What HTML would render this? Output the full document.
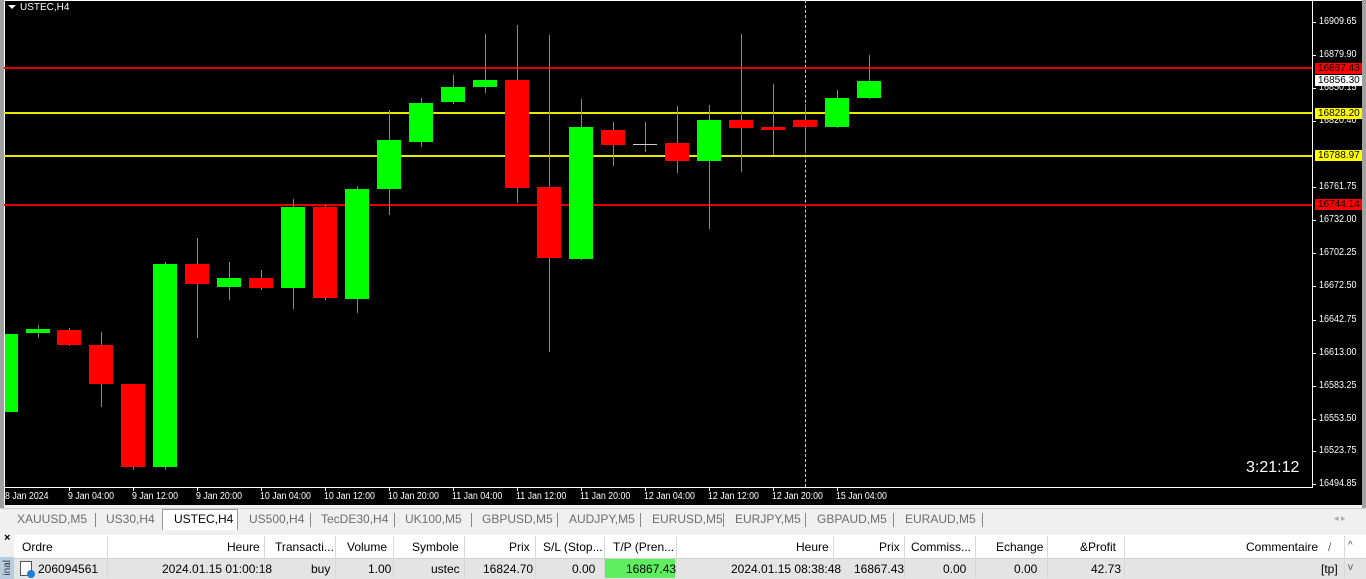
<!DOCTYPE html>
<html><head><meta charset="utf-8"><style>
*{margin:0;padding:0;box-sizing:border-box}
body{width:1366px;height:579px;overflow:hidden;background:#f0f0f0;font-family:"Liberation Sans",sans-serif;position:relative}
.a{position:absolute}
#chart{left:4px;top:0;width:1358px;height:505px;background:#000;border-top:1px solid #fff;border-left:1px solid #fff}
.g{background:#00ff00}.r{background:#ff0000}
.w{position:absolute;width:1px;background:#888}
.p{position:absolute;left:1319px;color:#fff;font-size:10px;transform:scaleX(.9);transform-origin:left}
.t{position:absolute;left:1312px;width:4px;height:1px;background:#fff}
.lb{position:absolute;left:1315px;width:47px;height:11px;font-size:10px;line-height:11px;padding-left:3px}
.d{position:absolute;top:491px;color:#fff;font-size:10px;transform:scaleX(.88);transform-origin:left}
.dt{position:absolute;top:487px;width:1px;height:4px;background:#fff}
.tab{position:absolute;top:512px;font-size:12px;color:#6d6d6d}
.sep{position:absolute;top:513px;width:1px;height:14px;background:#888}
.h{position:absolute;top:540px;font-size:12px;color:#000}
.c{position:absolute;top:562px;font-size:12px;color:#000}
.vl{position:absolute;top:536px;width:1px;height:42px;background:#d8d8d8}
</style></head><body>
<div class="a" style="left:0;top:0;width:4px;height:508px;background:#a0a0a0"></div>
<div id="chart" class="a"></div>
<div class="a" style="left:1362px;top:0;width:4px;height:508px;background:#a0a0a0"></div>
<div class="a" style="left:8px;top:5px;width:0;height:0;border-left:4px solid transparent;border-right:4px solid transparent;border-top:4px solid #fff"></div>
<div class="a" style="left:20px;top:2px;color:#fff;font-size:10px">USTEC,H4</div>
<div class="a" style="left:1312px;top:0;width:1px;height:488px;background:#fff"></div>
<div class="a" style="left:4px;top:487px;width:1309px;height:1px;background:#fff"></div>
<div class="a" style="left:805px;top:0;width:0;height:487px;border-left:1px dashed #ccc"></div>
<div class="a" style="left:4px;top:67px;width:1308px;height:2px;background:#e00000"></div>
<div class="a" style="left:4px;top:112px;width:1308px;height:2px;background:#e8e800"></div>
<div class="a" style="left:4px;top:155px;width:1308px;height:2px;background:#e8e800"></div>
<div class="a" style="left:4px;top:204px;width:1308px;height:2px;background:#e00000"></div>
<div id="candles">
<div class="a g" style="left:5px;top:334px;width:13px;height:78px"></div>
<div class="w" style="left:38px;top:325px;height:13px"></div><div class="a g" style="left:26px;top:329px;width:24px;height:4px"></div>
<div class="w" style="left:69px;top:328px;height:18px"></div><div class="a r" style="left:57px;top:330px;width:24px;height:15px"></div>
<div class="w" style="left:101px;top:332px;height:75px"></div><div class="a r" style="left:89px;top:345px;width:24px;height:39px"></div>
<div class="w" style="left:133px;top:384px;height:86px"></div><div class="a r" style="left:121px;top:384px;width:24px;height:83px"></div>
<div class="w" style="left:165px;top:262px;height:208px"></div><div class="a g" style="left:153px;top:264px;width:24px;height:203px"></div>
<div class="w" style="left:197px;top:238px;height:100px"></div><div class="a r" style="left:185px;top:264px;width:24px;height:20px"></div>
<div class="w" style="left:229px;top:262px;height:38px"></div><div class="a g" style="left:217px;top:278px;width:24px;height:9px"></div>
<div class="w" style="left:261px;top:270px;height:20px"></div><div class="a r" style="left:249px;top:278px;width:24px;height:10px"></div>
<div class="w" style="left:293px;top:199px;height:110px"></div><div class="a g" style="left:281px;top:207px;width:24px;height:81px"></div>
<div class="w" style="left:325px;top:205px;height:95px"></div><div class="a r" style="left:313px;top:207px;width:24px;height:91px"></div>
<div class="w" style="left:357px;top:186px;height:127px"></div><div class="a g" style="left:345px;top:189px;width:24px;height:110px"></div>
<div class="w" style="left:389px;top:110px;height:105px"></div><div class="a g" style="left:377px;top:140px;width:24px;height:49px"></div>
<div class="w" style="left:421px;top:98px;height:49px"></div><div class="a g" style="left:409px;top:103px;width:24px;height:39px"></div>
<div class="w" style="left:453px;top:75px;height:29px"></div><div class="a g" style="left:441px;top:87px;width:24px;height:15px"></div>
<div class="w" style="left:485px;top:34px;height:59px"></div><div class="a g" style="left:473px;top:80px;width:24px;height:7px"></div>
<div class="w" style="left:517px;top:25px;height:178px"></div><div class="a r" style="left:505px;top:80px;width:24px;height:108px"></div>
<div class="w" style="left:549px;top:35px;height:317px"></div><div class="a r" style="left:537px;top:187px;width:24px;height:71px"></div>
<div class="w" style="left:581px;top:99px;height:161px"></div><div class="a g" style="left:569px;top:127px;width:24px;height:132px"></div>
<div class="w" style="left:613px;top:122px;height:44px"></div><div class="a r" style="left:601px;top:130px;width:24px;height:15px"></div>
<div class="w" style="left:645px;top:122px;height:30px"></div><div class="a" style="left:633px;top:144px;width:24px;height:1px;background:#ccc"></div>
<div class="w" style="left:677px;top:106px;height:67px"></div><div class="a r" style="left:665px;top:143px;width:24px;height:18px"></div>
<div class="w" style="left:709px;top:105px;height:124px"></div><div class="a g" style="left:697px;top:120px;width:24px;height:41px"></div>
<div class="w" style="left:741px;top:34px;height:138px"></div><div class="a r" style="left:729px;top:120px;width:24px;height:8px"></div>
<div class="w" style="left:773px;top:84px;height:71px"></div><div class="a r" style="left:761px;top:127px;width:24px;height:3px"></div>
<div class="w" style="left:805px;top:104px;height:48px"></div><div class="a r" style="left:793px;top:120px;width:24px;height:7px"></div>
<div class="w" style="left:837px;top:90px;height:38px"></div><div class="a g" style="left:825px;top:98px;width:24px;height:29px"></div>
<div class="w" style="left:869px;top:55px;height:44px"></div><div class="a g" style="left:857px;top:81px;width:24px;height:17px"></div>
</div>
<div class="t" style="top:22px"></div><div class="p" style="top:16px">16909.65</div>
<div class="t" style="top:55px"></div><div class="p" style="top:49px">16879.90</div>
<div class="t" style="top:88px"></div><div class="p" style="top:82px">16850.15</div>
<div class="t" style="top:121px"></div><div class="p" style="top:115px">16820.40</div>
<div class="t" style="top:187px"></div><div class="p" style="top:181px">16761.75</div>
<div class="t" style="top:220px"></div><div class="p" style="top:214px">16732.00</div>
<div class="t" style="top:253px"></div><div class="p" style="top:247px">16702.25</div>
<div class="t" style="top:286px"></div><div class="p" style="top:280px">16672.50</div>
<div class="t" style="top:320px"></div><div class="p" style="top:314px">16642.75</div>
<div class="t" style="top:353px"></div><div class="p" style="top:347px">16613.00</div>
<div class="t" style="top:386px"></div><div class="p" style="top:380px">16583.25</div>
<div class="t" style="top:419px"></div><div class="p" style="top:413px">16553.50</div>
<div class="t" style="top:451px"></div><div class="p" style="top:445px">16523.75</div>
<div class="t" style="top:484px"></div><div class="p" style="top:478px">16494.85</div>
<div class="lb" style="top:63px;background:#f00;color:#000">16867.43</div>
<div class="lb" style="top:75px;background:#fff;color:#000">16856.30</div>
<div class="lb" style="top:108px;background:#ff0;color:#000">16828.20</div>
<div class="lb" style="top:150px;background:#ff0;color:#000">16788.97</div>
<div class="lb" style="top:199px;background:#f00;color:#000">16744.14</div>
<div class="a" style="left:1246px;top:459px;color:#fff;font-size:16px">3:21:12</div>
<div class="d" style="left:5px">8 Jan 2024</div>
<div class="dt" style="left:69px"></div><div class="d" style="left:68px">9 Jan 04:00</div>
<div class="dt" style="left:133px"></div><div class="d" style="left:132px">9 Jan 12:00</div>
<div class="dt" style="left:197px"></div><div class="d" style="left:196px">9 Jan 20:00</div>
<div class="dt" style="left:261px"></div><div class="d" style="left:260px">10 Jan 04:00</div>
<div class="dt" style="left:325px"></div><div class="d" style="left:324px">10 Jan 12:00</div>
<div class="dt" style="left:389px"></div><div class="d" style="left:388px">10 Jan 20:00</div>
<div class="dt" style="left:453px"></div><div class="d" style="left:452px">11 Jan 04:00</div>
<div class="dt" style="left:517px"></div><div class="d" style="left:516px">11 Jan 12:00</div>
<div class="dt" style="left:581px"></div><div class="d" style="left:580px">11 Jan 20:00</div>
<div class="dt" style="left:645px"></div><div class="d" style="left:644px">12 Jan 04:00</div>
<div class="dt" style="left:709px"></div><div class="d" style="left:708px">12 Jan 12:00</div>
<div class="dt" style="left:773px"></div><div class="d" style="left:772px">12 Jan 20:00</div>
<div class="dt" style="left:837px"></div><div class="d" style="left:836px">15 Jan 04:00</div>
<div class="a" style="left:0;top:508px;width:1366px;height:1px;background:#d0d0d0"></div>
<div class="a" style="left:162px;top:509px;width:76px;height:21px;background:#fff;border:1px solid #999;border-bottom:none"></div>
<div class="tab" style="left:17px">XAUUSD,M5</div><div class="sep" style="left:95px"></div>
<div class="tab" style="left:106px">US30,H4</div>
<div class="tab" style="left:174px;color:#000">USTEC,H4</div>
<div class="tab" style="left:249px">US500,H4</div><div class="sep" style="left:310px"></div>
<div class="tab" style="left:321px">TecDE30,H4</div><div class="sep" style="left:394px"></div>
<div class="tab" style="left:405px">UK100,M5</div><div class="sep" style="left:471px"></div>
<div class="tab" style="left:482px">GBPUSD,M5</div><div class="sep" style="left:557px"></div>
<div class="tab" style="left:569px">AUDJPY,M5</div><div class="sep" style="left:640px"></div>
<div class="tab" style="left:652px">EURUSD,M5</div><div class="sep" style="left:723px"></div>
<div class="tab" style="left:735px">EURJPY,M5</div><div class="sep" style="left:805px"></div>
<div class="tab" style="left:817px">GBPAUD,M5</div><div class="sep" style="left:893px"></div>
<div class="tab" style="left:905px">EURAUD,M5</div><div class="sep" style="left:982px"></div>
<div class="a" style="left:1334px;top:513px;font-size:9px;color:#aaa">◂ ▸</div>
<div class="a" style="left:0;top:531px;width:1366px;height:48px;background:#f0f0f0"></div>
<div class="a" style="left:4px;top:532px;font-size:11px;font-weight:bold">×</div>
<div class="a" style="left:0;top:557px;width:14px;height:22px;background:#b8cce0"></div>
<div class="a" style="left:14px;top:535px;width:1352px;height:23px;background:#fff"></div>
<div class="a" style="left:14px;top:558px;width:1352px;height:21px;background:#e4e4e4;border-top:1px solid #ccc"></div>
<div class="a" style="left:605px;top:559px;width:70px;height:19px;background:#5fee5f"></div>
<div class="vl" style="left:107px"></div><div class="vl" style="left:264px"></div><div class="vl" style="left:335px"></div><div class="vl" style="left:393px"></div><div class="vl" style="left:464px"></div><div class="vl" style="left:535px"></div><div class="vl" style="left:604px"></div><div class="vl" style="left:676px"></div><div class="vl" style="left:833px"></div><div class="vl" style="left:904px"></div><div class="vl" style="left:975px"></div><div class="vl" style="left:1047px"></div><div class="vl" style="left:1124px"></div><div class="vl" style="left:1344px"></div>
<div class="h" style="left:22px">Ordre</div>
<div class="h" style="left:227px">Heure</div>
<div class="h" style="left:275px">Transacti...</div>
<div class="h" style="left:347px">Volume</div>
<div class="h" style="left:412px">Symbole</div>
<div class="h" style="left:509px">Prix</div>
<div class="h" style="left:543px">S/L (Stop...</div>
<div class="h" style="left:613px">T/P (Pren...</div>
<div class="h" style="left:796px">Heure</div>
<div class="h" style="left:879px">Prix</div>
<div class="h" style="left:911px">Commiss...</div>
<div class="h" style="left:996px">Echange</div>
<div class="h" style="left:1080px">&amp;Profit</div>
<div class="h" style="left:1246px">Commentaire</div>
<div class="h" style="left:1328px;color:#666">/</div>
<div class="h" style="left:1348px;color:#555;font-size:10px">^</div>
<div class="a" style="left:20px;top:561px;width:12px;height:15px;border:1px solid #555;background:#fff"></div>
<div class="a" style="left:27px;top:570px;width:8px;height:8px;border-radius:50%;background:#1e7ed8"></div>
<div class="c" style="left:38px">206094561</div>
<div class="c" style="left:162px">2024.01.15 01:00:18</div>
<div class="c" style="left:311px">buy</div>
<div class="c" style="left:368px">1.00</div>
<div class="c" style="left:431px">ustec</div>
<div class="c" style="left:483px">16824.70</div>
<div class="c" style="left:572px">0.00</div>
<div class="c" style="left:626px">16867.43</div>
<div class="c" style="left:731px">2024.01.15 08:38:48</div>
<div class="c" style="left:854px">16867.43</div>
<div class="c" style="left:943px">0.00</div>
<div class="c" style="left:1014px">0.00</div>
<div class="c" style="left:1091px">42.73</div>
<div class="c" style="left:1321px">[tp]</div>
<div class="c" style="left:1348px;color:#555;font-size:10px">v</div>
<div class="a" style="left:2px;top:560px;font-size:10px;color:#333;writing-mode:vertical-rl;transform:rotate(180deg)">inal</div>
</body></html>
